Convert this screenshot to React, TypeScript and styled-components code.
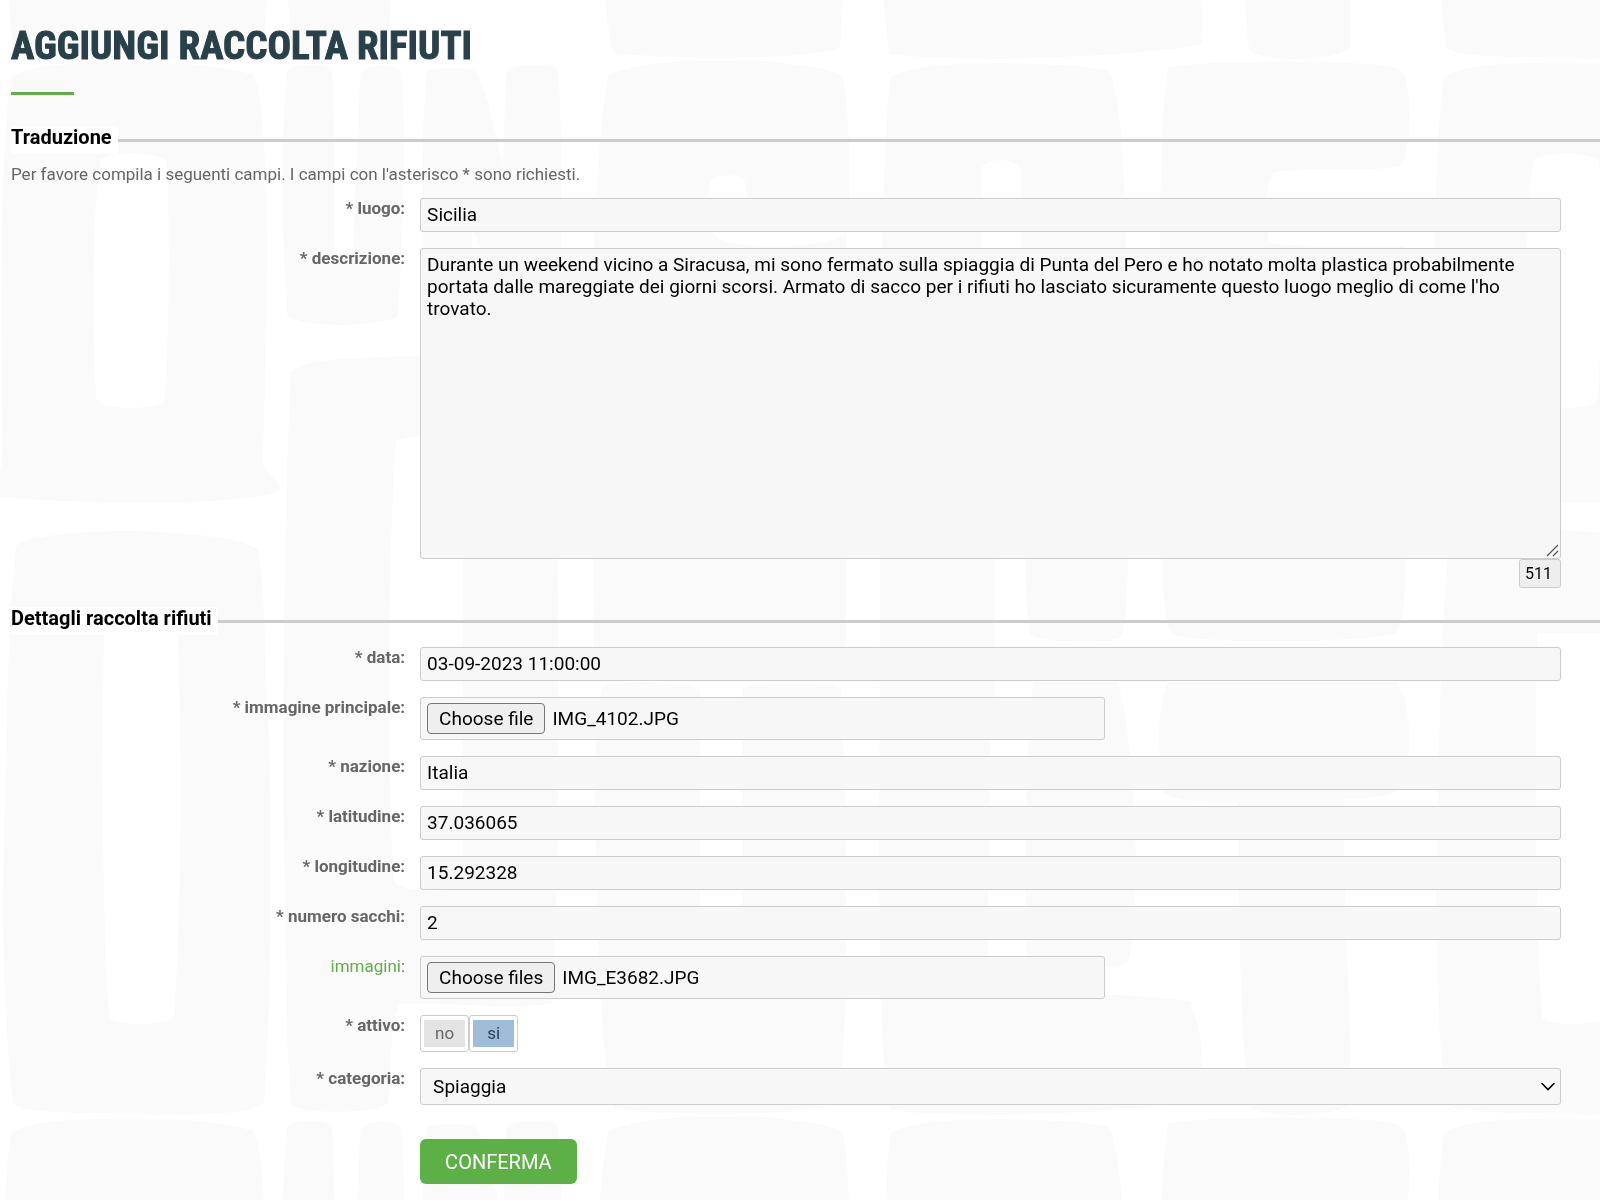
import React, { useRef, useState } from 'react';
import styled, { createGlobalStyle } from 'styled-components';

const GlobalStyle = createGlobalStyle`
  *, *::before, *::after { box-sizing: border-box; }
  html { background: #fff; }
  body {
    margin: 0;
    color: #666;
    font-family: Roboto, "Liberation Sans", sans-serif;
    font-size: 17px;
    line-height: 20px;
  }
`;

const Texture = styled.svg`
  position: fixed;
  inset: 0;
  z-index: -1;
  width: 100%;
  height: 100%;
`;

const Page = styled.main`
  padding: 24px 0 16px 11px;
`;

const Title = styled.h1`
  margin: 0;
  color: #28404a;
  font-family: "Roboto Condensed", Roboto, "Liberation Sans", sans-serif;
  font-size: 39px;
  font-weight: 700;
  line-height: 44px;
  text-transform: uppercase;
  -webkit-text-stroke: 1px #28404a;

  &::after {
    content: "";
    display: block;
    width: 63px;
    height: 3px;
    margin-top: 24px;
    background: #5db046;
  }
`;

const Form = styled.form`
  display: flex;
  flex-direction: column;
  gap: 19px;
  margin-top: 31px;
`;

const Section = styled.fieldset`
  min-width: 0;
  margin: 0;
  padding: 0;
  border: 0;
  border-top: 3px solid #ccc;
`;

const SectionTitle = styled.legend`
  padding: 0 6px 5px 0;
  background: #fff;
  color: #000;
  font-size: 20px;
  font-weight: 700;
  line-height: 23px;
`;

const Hint = styled.p`
  margin: 8px 0 0;
  line-height: 24px;
`;

const Rows = styled.div`
  display: flex;
  flex-direction: column;
  gap: 16px;
  padding-top: 12px;
`;

const Row = styled.div`
  display: grid;
  grid-template-columns: 19fr 55fr;
  column-gap: 15px;
  align-items: start;
  padding-right: 39px;
`;

const Label = styled.label<{ $optional?: boolean }>`
  font-weight: ${(p) => (p.$optional ? 400 : 700)};
  text-align: right;

  span { color: #5db046; }
`;

const fieldBox = `
  width: 100%;
  border: 1px solid #ccc;
  border-radius: 3px;
  background: #f7f7f7;
  color: #000;
  font-family: inherit;
  font-size: 19px;
  line-height: 22px;
`;

const TextInput = styled.input`
  ${fieldBox}
  height: 34px;
  padding: 0 6px 1px;
`;

const TextBox = styled.textarea`
  ${fieldBox}
  display: block;
  height: 311px;
  padding: 5px 6px;
  resize: vertical;

  &::-webkit-resizer { background: transparent; }
`;

const TextBoxGroup = styled.div`
  display: flex;
  flex-direction: column;
  align-items: flex-end;
`;

const TextBoxFrame = styled.div`
  position: relative;
  width: 100%;

  svg {
    position: absolute;
    right: 2px;
    bottom: 2px;
    pointer-events: none;
  }
`;

const Counter = styled.output`
  width: 42px;
  height: 29px;
  padding: 0 5px;
  border: 1px solid #ccc;
  border-radius: 3px;
  background: #eee;
  color: #000;
  font-size: 16px;
  line-height: 27px;
`;

const FileBox = styled.div`
  ${fieldBox}
  display: flex;
  align-items: center;
  gap: 7px;
  width: 60%;
  height: 43px;
  padding: 0 6px;
`;

const FileButton = styled.button`
  height: 31px;
  padding: 0 11px;
  border: 1px solid #767676;
  border-radius: 4px;
  background: #efefef;
  color: #000;
  font: inherit;
`;

const Toggle = styled.div`
  display: flex;
`;

const ToggleOption = styled.label`
  width: 49px;
  height: 37px;
  padding: 4px 3px;
  border: 1px solid #ccc;
  border-radius: 3px;
  background: #fff;
  text-align: center;

  input { position: absolute; opacity: 0; }

  span {
    display: block;
    background: #e4e4e4;
    line-height: 27px;
  }

  input:checked + span {
    background: #9fbcd9;
    color: #2b4358;
  }
`;

const SelectWrap = styled.div`
  position: relative;

  svg {
    position: absolute;
    top: 12px;
    right: 6px;
    pointer-events: none;
  }
`;

const Select = styled.select`
  ${fieldBox}
  display: block;
  height: 37px;
  padding: 0 32px 0 12px;
  appearance: none;
`;

const Actions = styled(Row)`
  margin-top: 18px;
`;

const Submit = styled.button`
  grid-column: 2;
  justify-self: start;
  height: 45px;
  padding: 0 25px;
  border: 0;
  border-radius: 6px;
  background: #5db046;
  color: #fff;
  font-family: inherit;
  font-size: 20px;
  text-transform: uppercase;
`;

function Background() {
  return (
    <Texture aria-hidden="true">
      <defs>
        <pattern id="blocks" x="0" y="61" width="1433" height="1056" patternUnits="userSpaceOnUse">
          <g transform="translate(0 -61)" fill="#fafafa">
            {/* upper row */}
            <path
              fillRule="evenodd"
              d="M11 78C22 66 70 63 130 62C190 63 240 68 254 76C262 90 264 150 267 200C269 300 264 400 263 462C268 474 279 480 280 490C262 500 200 503 130 502C80 502 30 500 0 497V470C4 460 2 430 2 385C0 300 2 200 5 140C7 110 9 90 11 78ZM101 160C112 152 154 152 166 160C170 200 170 350 164 402C155 410 105 410 97 401C92 350 92 200 101 160Z"
            />
            <path d="M287 70C295 63 325 63 332 70C335 130 334 200 335 256H352C357 190 357 110 361 72C370 64 395 64 402 72C406 130 403 240 398 316C380 328 300 328 287 315C282 240 281 130 287 70Z" />
            <path d="M427 71C437 67 465 67 475 71C488 90 494 130 503 165C505 130 504 90 507 70C518 63 550 63 558 70C563 120 561 240 560 330H505C490 290 482 250 472 226L470 330H423C421 240 421 130 427 71Z" />
            <path d="M608 76C630 62 700 60 725 60C760 60 820 65 842 75C850 110 849 160 849 198H746C746 190 746 182 743 178C735 174 717 174 710 182C706 210 706 235 722 240C745 250 830 248 846 233V648H594C590 400 590 180 608 76Z" />
            <path
              fillRule="evenodd"
              d="M890 78C905 66 955 63 1000 63C1060 64 1100 67 1110 72C1122 110 1124 160 1126 250L1128 560C1127 600 1126 630 1120 638C1100 644 1040 642 1030 634C1025 600 1026 570 1026 520H995V700H880C880 400 880 180 890 78ZM981 420V170C985 157 1015 157 1021 170V420Z"
            />
            <path d="M1168 68C1190 61 1300 60 1370 64C1390 66 1400 68 1404 73C1412 100 1411 140 1402 165C1392 172 1300 168 1275 172C1264 178 1266 220 1269 242C1280 248 1380 245 1405 247V560C1405 600 1404 620 1396 633C1370 643 1190 644 1171 634C1162 610 1163 580 1163 540C1158 350 1158 120 1168 68Z" />

            {/* lower row */}
            <path
              fillRule="evenodd"
              d="M16 546C30 535 80 531 130 531C190 532 245 538 258 550C266 600 264 650 269 740C272 880 270 1040 264 1103C250 1115 190 1116 130 1114C80 1113 25 1113 13 1104C4 1020 2 940 4 840C7 720 8 620 16 546ZM104 633H178C182 760 182 900 174 1018C160 1026 120 1026 109 1018C102 900 102 760 104 633Z"
            />
            <path
              fillRule="evenodd"
              d="M291 372C300 360 350 357 420 356C490 356 540 360 550 375C560 500 562 800 553 1003C520 1010 450 1002 400 1004C390 1020 392 1060 388 1104C370 1114 310 1114 292 1106C285 1040 286 960 284 840C283 700 284 500 291 372ZM396 441C410 434 445 434 463 441V887C450 893 405 893 394 882C386 740 388 560 396 441Z"
            />
            <path d="M603 685C630 680 690 682 700 690V940H742V690C750 680 830 682 841 688C847 800 849 1000 840 1103C820 1114 700 1118 614 1109C600 1070 597 900 595 800C595 750 597 700 603 685Z" />
            <path d="M880 640H993C990 760 988 860 988 990C1040 995 1160 993 1190 1002C1202 1030 1204 1060 1202 1100C1150 1112 960 1120 890 1110C880 1060 880 940 879 860Z" />
            <path d="M1033 682H1118C1128 720 1134 780 1136 860C1135 910 1134 950 1127 962C1110 972 1040 970 1027 962C1023 850 1027 740 1033 682Z" />
            <path d="M1168 682H1398C1412 710 1411 750 1405 786C1395 798 1360 799 1344 798C1342 900 1352 1000 1350 1104C1335 1118 1260 1118 1249 1106C1240 1020 1238 900 1238 802C1200 802 1170 800 1164 792C1157 750 1157 710 1168 682Z" />
          </g>
        </pattern>
      </defs>
      <rect width="100%" height="100%" fill="url(#blocks)" />
    </Texture>
  );
}

type FieldProps = {
  id: string;
  label: string;
  children: React.ReactNode;
  optional?: boolean;
};

function Field({ id, label, children, optional }: FieldProps) {
  return (
    <Row>
      <Label htmlFor={id} $optional={optional}>
        {optional ? <><span>{label}</span>:</> : `* ${label}:`}
      </Label>
      {children}
    </Row>
  );
}

function TextField({ id, label, value }: { id: string; label: string; value: string }) {
  return (
    <Field id={id} label={label}>
      <TextInput id={id} name={id} type="text" defaultValue={value} />
    </Field>
  );
}

function FilePicker({ id, action, initial, multiple }: { id: string; action: string; initial: string; multiple?: boolean }) {
  const input = useRef<HTMLInputElement>(null);
  const [name, setName] = useState(initial);
  return (
    <FileBox>
      <input
        ref={input}
        id={id}
        name={id}
        type="file"
        hidden
        multiple={multiple}
        onChange={(e) => setName(Array.from(e.target.files ?? []).map((f) => f.name).join(', '))}
      />
      <FileButton type="button" onClick={() => input.current?.click()}>{action}</FileButton>
      <span>{name}</span>
    </FileBox>
  );
}

const story =
  "Durante un weekend vicino a Siracusa, mi sono fermato sulla spiaggia di Punta del Pero e ho notato molta plastica probabilmente portata dalle mareggiate dei giorni scorsi. Armato di sacco per i rifiuti ho lasciato sicuramente questo luogo meglio di come l'ho trovato.";

export default function App() {
  return (
    <>
      <GlobalStyle />
      <Background />
      <Page>
        <Title>Aggiungi raccolta rifiuti</Title>
        <Form onSubmit={(e) => e.preventDefault()}>
          <Section>
            <SectionTitle>Traduzione</SectionTitle>
            <Hint>Per favore compila i seguenti campi. I campi con l'asterisco * sono richiesti.</Hint>
            <Rows>
              <TextField id="luogo" label="luogo" value="Sicilia" />
              <Field id="descrizione" label="descrizione">
                <TextBoxGroup>
                  <TextBoxFrame>
                    <TextBox id="descrizione" name="descrizione" defaultValue={story} spellCheck={false} />
                    <svg width="13" height="13" viewBox="0 0 13 13" fill="none" stroke="#555" strokeWidth="1.2" aria-hidden="true">
                      <path d="M1 12L12 1M7 12L12 7" />
                    </svg>
                  </TextBoxFrame>
                  <Counter htmlFor="descrizione">511</Counter>
                </TextBoxGroup>
              </Field>
            </Rows>
          </Section>

          <Section>
            <SectionTitle>Dettagli raccolta rifiuti</SectionTitle>
            <Rows>
              <TextField id="data" label="data" value="03-09-2023 11:00:00" />
              <Field id="principale" label="immagine principale">
                <FilePicker id="principale" action="Choose file" initial="IMG_4102.JPG" />
              </Field>
              <TextField id="nazione" label="nazione" value="Italia" />
              <TextField id="latitudine" label="latitudine" value="37.036065" />
              <TextField id="longitudine" label="longitudine" value="15.292328" />
              <TextField id="sacchi" label="numero sacchi" value="2" />
              <Field id="immagini" label="immagini" optional>
                <FilePicker id="immagini" action="Choose files" initial="IMG_E3682.JPG" multiple />
              </Field>
              <Field id="attivo-si" label="attivo">
                <Toggle>
                  <ToggleOption>
                    <input type="radio" name="attivo" value="no" />
                    <span>no</span>
                  </ToggleOption>
                  <ToggleOption>
                    <input id="attivo-si" type="radio" name="attivo" value="si" defaultChecked />
                    <span>si</span>
                  </ToggleOption>
                </Toggle>
              </Field>
              <Field id="categoria" label="categoria">
                <SelectWrap>
                  <Select id="categoria" name="categoria" defaultValue="Spiaggia">
                    <option>Spiaggia</option>
                  </Select>
                  <svg width="14" height="14" viewBox="0 0 14 14" fill="none" stroke="#000" strokeWidth="1.6" strokeLinecap="round" aria-hidden="true">
                    <path d="M1 3.5L7 9.5L13 3.5" />
                  </svg>
                </SelectWrap>
              </Field>
              <Actions>
                <Submit type="submit">Conferma</Submit>
              </Actions>
            </Rows>
          </Section>
        </Form>
      </Page>
    </>
  );
}
